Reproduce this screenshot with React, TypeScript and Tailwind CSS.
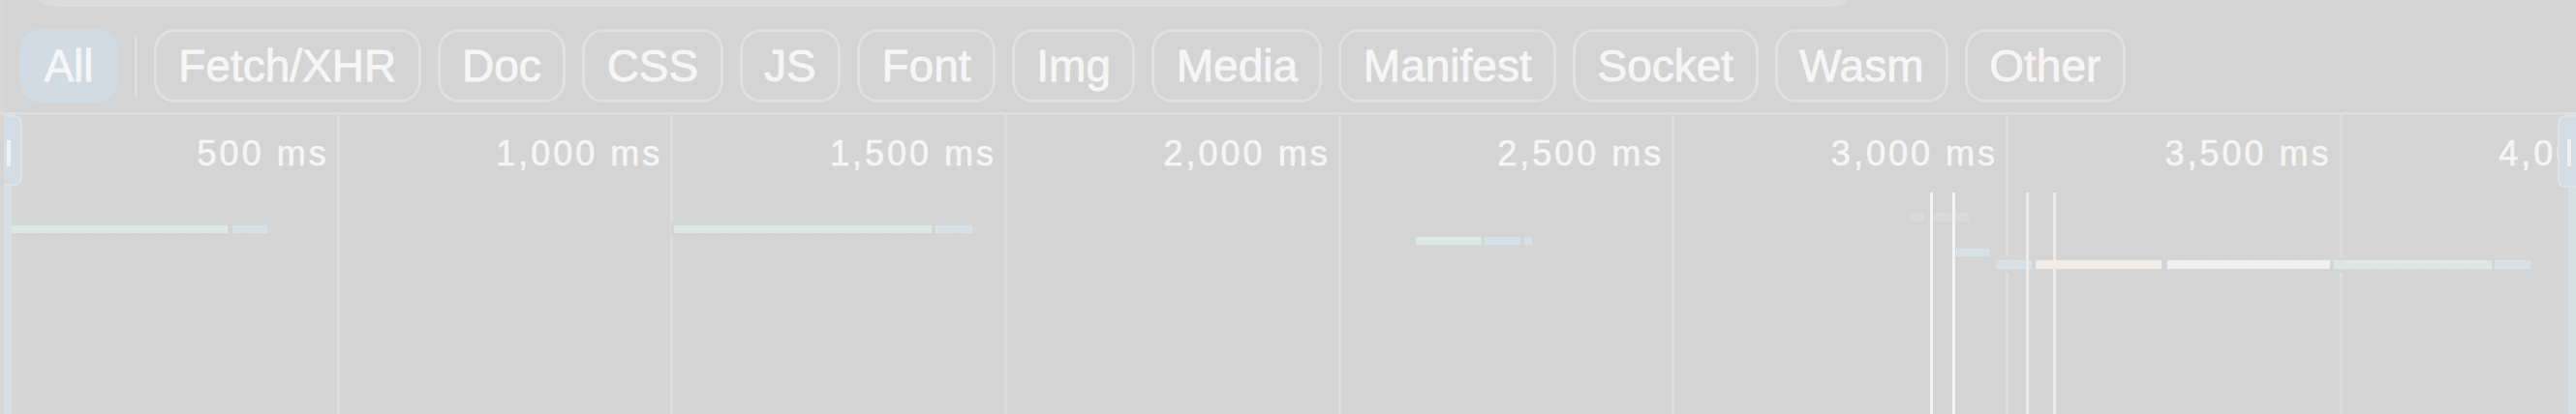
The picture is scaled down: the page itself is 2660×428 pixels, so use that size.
import React from 'react';

const FILTERS = ['Fetch/XHR', 'Doc', 'CSS', 'JS', 'Font', 'Img', 'Media', 'Manifest', 'Socket', 'Wasm', 'Other'];

const TICKS = ['500 ms', '1,000 ms', '1,500 ms', '2,000 ms', '2,500 ms', '3,000 ms', '3,500 ms', '4,000 ms'];

// request bars, in px relative to the top of the overview (y = 0 at the ruler line)
const BARS = [
  { x: 12, w: 223, y: 114, h: 8, fill: '#dce9e3' },
  { x: 240, w: 36, y: 114, h: 8, fill: '#d5e1e6' },
  { x: 696, w: 266, y: 114, h: 8, fill: '#dce9e3' },
  { x: 966, w: 38, y: 114, h: 8, fill: '#d5e1e6' },
  { x: 1462, w: 68, y: 126, h: 8, fill: '#dce9e3' },
  { x: 1533, w: 37, y: 126, h: 8, fill: '#d5e1e6' },
  { x: 1574, w: 8, y: 126, h: 8, fill: '#d5e1e6' },
  { x: 1972, w: 14, y: 102, h: 8, fill: '#dadada' },
  { x: 1998, w: 35, y: 102, h: 8, fill: '#dadada' },
  { x: 2020, w: 34, y: 138, h: 8, fill: '#d6e2e4' },
  { x: 2061, w: 37, y: 150, h: 9, fill: '#d7e1e8' },
  { x: 2102, w: 130, y: 150, h: 9, fill: '#f0ece8' },
  { x: 2238, w: 168, y: 150, h: 9, fill: '#eff0f2' },
  { x: 2410, w: 163, y: 150, h: 9, fill: '#dce8e2' },
  { x: 2576, w: 37, y: 150, h: 9, fill: '#d6e2e6' },
];

const MARKERS = [
  { x: 1993, fill: '#f4f4f4' },
  { x: 2016, fill: '#f4f4f4' },
  { x: 2092, fill: '#efebe6' },
  { x: 2120, fill: '#efebe6' },
];

const Chip = ({ label, active }: { label: string; active?: boolean }) => (
  <div
    className={`h-[76px] px-[22.4px] border-[3px] rounded-[22px] flex items-center text-[46px] leading-none text-[#f6f6f6] whitespace-nowrap [-webkit-text-stroke:0.8px_#f6f6f6] ${
      active ? 'bg-[#d1dbe3] border-[#d1dbe3]' : 'border-[#e0e0e0]'
    }`}
  >
    {label}
  </div>
);

const Overview = () => (
  <div className="relative h-[309px]">
    {/* ruler columns */}
    <div className="flex h-full pl-[6px]">
      {TICKS.map((t) => (
        <div
          key={t}
          className="w-[344.67px] shrink-0 h-full border-r-[3px] border-[#dedede] pr-[8px] pt-[22px] text-right text-[36px] leading-[36px] tracking-[3px] text-[#f6f6f6] whitespace-nowrap [-webkit-text-stroke:0.6px_#f6f6f6]"
        >
          {t}
        </div>
      ))}
    </div>

    {/* request chart */}
    <svg className="absolute inset-0" width={2660} height={309}>
      {BARS.map((b, i) => (
        <rect key={`g${i}`} x={b.x - 3} y={b.y - 4} width={b.w + 6} height={b.h + 8} fill="#d4d4d4" />
      ))}
      {BARS.map((b, i) => (
        <rect key={`b${i}`} x={b.x} y={b.y} width={b.w} height={b.h} fill={b.fill} stroke="#e2e8ea" strokeWidth={0.6} strokeDasharray="1 2" />
      ))}
      {MARKERS.map((m) => (
        <rect key={m.x} x={m.x} y={80} width={3} height={229} fill={m.fill} />
      ))}
    </svg>

    {/* left window handle */}
    <div className="absolute left-[4px] top-0 w-[19px] h-[73px] bg-[#d2dce4] border-2 border-l-0 border-[#dbe3e9] rounded-r-[8px]">
      <div className="ml-[3px] mt-[24px] w-[4px] h-[27px] bg-[#f2f2f2]" />
    </div>
    <div className="absolute left-[4px] top-[73px] bottom-0 w-[8px] bg-[#d6dfe4]" />

    {/* right window handle */}
    <div className="absolute right-0 top-0 w-[19px] h-[75px] bg-[#d2dce4] border-2 border-r-0 border-[#dbe3e9] rounded-l-[8px]">
      <div className="ml-[8px] mt-[23px] w-[4px] h-[28px] bg-[#f2f2f2]" />
    </div>
    <div className="absolute right-0 top-[75px] bottom-0 w-[8px] bg-[#d6dfe4]" />
  </div>
);

export default function App() {
  return (
    <div className="w-[2660px] h-[428px] bg-[#d4d4d4] overflow-hidden flex flex-col font-['Liberation_Sans',Arial,sans-serif]">
      <div className="h-[116px] shrink-0 border-l-4 border-[#d8d8d8] flex flex-col">
        {/* bottom edge of the filter input */}
        <div className="ml-[36px] w-[1867px] h-[7px] bg-[#dcdcdc] rounded-bl-[24px_7px] rounded-br-[24px_7px]" />

        {/* type filter chips */}
        <div className="mt-[23px] pl-[16px] flex items-center gap-[17px]">
          <Chip label="All" active />
          <div className="w-[3px] h-[63px] bg-[#dfdfdf]" />
          {FILTERS.map((f) => (
            <Chip key={f} label={f} />
          ))}
        </div>
      </div>

      <div className="h-[3px] shrink-0 bg-[#dedede]" />

      <Overview />
    </div>
  );
}
